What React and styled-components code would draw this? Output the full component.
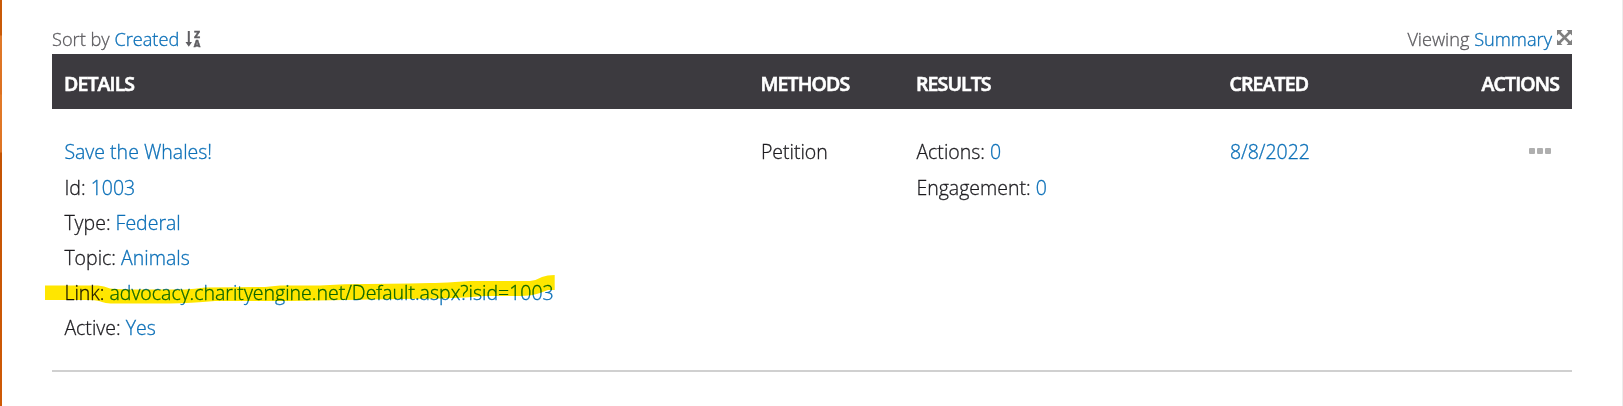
import React from 'react';
import styled, { createGlobalStyle } from 'styled-components';

const GlobalStyle = createGlobalStyle`
  body {
    margin: 0;
    background-color: #fff;
  }
`;

const Page = styled.div`
  box-sizing: border-box;
  height: 406px;
  display: flex;
  background-color: #fff;
  border-right: 1px solid #ececec;
  font-family: 'Open Sans', sans-serif;
  font-size: 19.5px;
  font-weight: 300;
  color: #1c1b1f;
  -webkit-text-stroke: 0.3px;
`;

const Edge = styled.div`
  width: 2px;
  flex: none;
  background: linear-gradient(#c95a08 0, #c95a08 35px, #e07a2a 36px, #dc7020 94px, #e27a28 95px, #de7424 152px, #c45404 153px, #cf5a06 100%);
`;

const Content = styled.div`
  flex: 1;
  padding: 24px 50px 0;
`;

const Toolbar = styled.div`
  display: flex;
  justify-content: space-between;
  height: 30px;
  line-height: 30px;
  font-size: 18.2px;
  color: #5c5b5f;
`;

const ToolbarGroup = styled.div`
  display: flex;
  white-space: pre;
`;

const Link = styled.a`
  color: #0c70b8;
  text-decoration: none;
`;

const SortIcon = styled.svg`
  width: 20px;
  height: 18px;
  margin: 7px 0 0 6px;
  overflow: visible;
`;

const ExpandIcon = styled.svg`
  width: 15px;
  height: 15px;
  margin: 6px 0 0 5px;
`;

const Columns = styled.div`
  display: grid;
  grid-template-columns: 696.5px 155.5px 313.5px 1fr auto;
  padding: 0 12px;
`;

const HeaderRow = styled(Columns)`
  height: 55px;
  line-height: 60px;
  padding-right: 13px;
  box-sizing: border-box;
  background-color: #3c3a3f;
  color: #fff;
  font-weight: 600;
`;

const BodyRow = styled(Columns)`
  height: 261px;
  border-bottom: 2px solid #d0d0d0;
`;

const HeaderCell = styled.div`
  letter-spacing: -0.88px;
  -webkit-text-stroke: 0.6px #fff;
`;

const Cell = styled.div`
  padding: 25px 0 0 0.4px;
  line-height: 35px;
`;

const Line = styled.div`
  position: relative;
  white-space: nowrap;

  &:first-child {
    height: 36px;
  }
`;

const Marker = styled.svg`
  position: absolute;
  left: -19.4px;
  top: -3px;
  width: 512px;
  height: 34px;
  mix-blend-mode: multiply;
  pointer-events: none;
`;

const MoreButton = styled.div`
  display: flex;
  gap: 2px;
  padding: 39px 9px 0 0;
  justify-content: flex-end;
`;

const Dot = styled.span`
  width: 6px;
  height: 6px;
  border-radius: 1px;
  background-color: #afafaf;
`;

const details = [
  { label: 'Id', value: '1003' },
  { label: 'Type', value: 'Federal' },
  { label: 'Topic', value: 'Animals' },
  { label: 'Link', value: 'advocacy.charityengine.net/Default.aspx?isid=1003', marked: true },
  { label: 'Active', value: 'Yes' },
];

const App = () => {
  return (
    <Page>
      <GlobalStyle />
      <Edge />
      <Content>
        <Toolbar>
          <ToolbarGroup>
            Sort by <Link href="#">Created</Link>
            <SortIcon viewBox="0 0 20 18" fill="#5f5e62">
              <path d="M2.8 0h2v11h2.2L3.8 15.8.5 11h2.3z" />
              <text x="9" y="6.7" fontFamily="DejaVu Sans" fontSize="8.5" fontWeight="700" stroke="#5f5e62" strokeWidth="0.5">Z</text>
              <text x="8.8" y="15.6" fontFamily="DejaVu Sans" fontSize="8.5" fontWeight="700" stroke="#5f5e62" strokeWidth="0.5">A</text>
            </SortIcon>
          </ToolbarGroup>
          <ToolbarGroup>
            Viewing <Link href="#">Summary</Link>
            <ExpandIcon viewBox="0 0 15 15" fill="#808080">
              <path d="M0 0h5.5L0 5.5zM15 0v5.5L9.5 0zM0 15V9.5L5.5 15zM15 15H9.5L15 9.5z" />
              <path d="M2 2l11 11M13 2L2 13" stroke="#808080" strokeWidth="2.5" />
            </ExpandIcon>
          </ToolbarGroup>
        </Toolbar>

        <HeaderRow>
          <HeaderCell>DETAILS</HeaderCell>
          <HeaderCell>METHODS</HeaderCell>
          <HeaderCell>RESULTS</HeaderCell>
          <HeaderCell>CREATED</HeaderCell>
          <HeaderCell>ACTIONS</HeaderCell>
        </HeaderRow>

        <BodyRow>
          <Cell>
            <Line><Link href="#">Save the Whales!</Link></Line>
            {details.map(item => (
              <Line key={item.label}>
                {item.label}: <Link href="#">{item.value}</Link>
                {item.marked && (
                  <Marker viewBox="45 272 512 34" fill="#ffe600">
                    <path d="M45 285.5H98Q104 286 110 288.5Q120 289.5 140 289.5H185Q195 289 205 287.5Q240 287 265 287L280 285.5H320L345 284.3Q390 284 430 283Q440 283 455 282L470 281H530Q537 280 542 277Q547 275 554.7 275V290H548L540 293Q532 296 520 296H485L465 297.5L440 298.5Q390 299 345 300L290 301H215Q190 303 170 303.5H120Q105 304 99 301Q95 300 88 300H45Z" />
                  </Marker>
                )}
              </Line>
            ))}
          </Cell>
          <Cell>
            <Line>Petition</Line>
          </Cell>
          <Cell>
            <Line>Actions: <Link href="#">0</Link></Line>
            <Line>Engagement: <Link href="#">0</Link></Line>
          </Cell>
          <Cell>
            <Line><Link href="#">8/8/2022</Link></Line>
          </Cell>
          <MoreButton>
            <Dot />
            <Dot />
            <Dot />
          </MoreButton>
        </BodyRow>
      </Content>
    </Page>
  );
};

export default App;
